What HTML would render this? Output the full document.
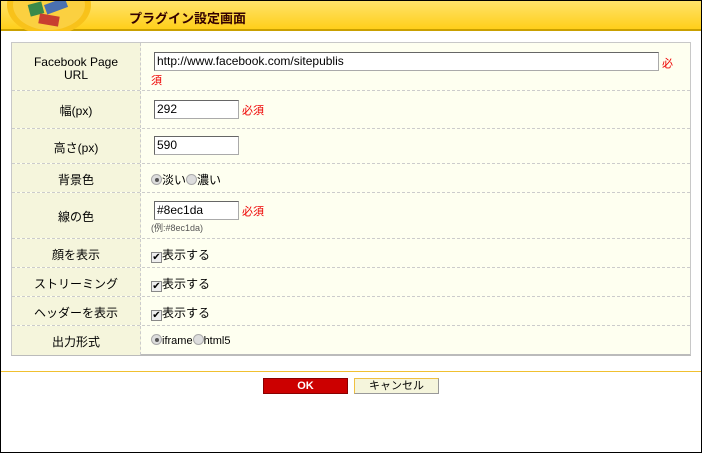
<!DOCTYPE html>
<html><head><meta charset="utf-8"><style>
*{margin:0;padding:0;box-sizing:border-box}
body{width:702px;height:453px;position:relative;background:#fff;font-family:"Liberation Sans","Noto Sans CJK JP",sans-serif;font-size:12px;color:#000;overflow:hidden}
.frame{position:absolute;left:0;top:0;width:702px;height:453px;border:1px solid #000}
.hdr{position:absolute;left:1px;top:1px;width:700px;height:30px;background:linear-gradient(#ffe36a,#ffcf1a);border-bottom:2px solid #c9a000}
.hdr .t{position:absolute;left:128px;top:7px;font-size:13px;font-weight:bold;color:#300}
.tbl{position:absolute;left:11px;top:42px;width:680px;height:314px;border:1px solid #c8c8c8;border-bottom:2px solid #bbb;background:#fefff0}
.lab{position:absolute;left:0;width:129px;background:#f5f5dc;border-right:1px dashed #ccc;text-align:center;padding-top:2px}
.row{position:absolute;left:0;width:678px;border-bottom:1px dashed #ccc}
.in{position:absolute;height:19px;border:1px solid #aaa;border-top-color:#666;border-left-color:#666;background:#fff;font-size:12px;padding:2px 2px;line-height:13px}
.req{position:absolute;color:#e00;font-size:11px}
.v{position:absolute;left:142px}
.rad{display:inline-block;width:11px;height:11px;border-radius:50%;border:1px solid #aaa;background:#ddd;vertical-align:-1px;position:relative}
.rad.on:after{content:"";position:absolute;left:3px;top:3px;width:4px;height:4px;border-radius:50%;background:#555}
.cb{display:inline-block;width:11px;height:11px;border:1px solid #888;background:#eee;vertical-align:-1px;font-size:10px;line-height:9px;text-align:center}
</style></head><body>
<div class="frame"></div>
<div class="hdr">
<svg width="100" height="30" style="position:absolute;left:0;top:0"><ellipse cx="48" cy="4" rx="42" ry="30" fill="#f8c21a"/><ellipse cx="48" cy="4" rx="36" ry="25" fill="#fbd040"/><rect x="28" y="2" width="14" height="12" fill="#3a8a4a" transform="rotate(-15 35 8)"/><rect x="44" y="0" width="22" height="10" fill="#4a70b0" transform="rotate(-20 55 5)"/><rect x="38" y="14" width="20" height="10" fill="#c84030" transform="rotate(10 48 19)"/></svg>
<div class="t">プラグイン設定画面</div></div>
<div class="tbl">
<div class="row" style="top:0;height:48px"><div class="lab" style="height:47px;padding-top:13px;line-height:13px">Facebook Page<br>URL</div></div>
<div class="row" style="top:48px;height:38px"><div class="lab" style="height:37px;line-height:37px">幅(px)</div></div>
<div class="row" style="top:86px;height:35px"><div class="lab" style="height:34px;line-height:34px">高さ(px)</div></div>
<div class="row" style="top:121px;height:29px"><div class="lab" style="height:28px;line-height:28px">背景色</div></div>
<div class="row" style="top:150px;height:46px"><div class="lab" style="height:45px;line-height:45px">線の色</div></div>
<div class="row" style="top:196px;height:29px"><div class="lab" style="height:28px;line-height:28px">顔を表示</div></div>
<div class="row" style="top:225px;height:29px"><div class="lab" style="height:28px;line-height:28px">ストリーミング</div></div>
<div class="row" style="top:254px;height:29px"><div class="lab" style="height:28px;line-height:28px">ヘッダーを表示</div></div>
<div class="row" style="top:283px;height:29px;border-bottom:none"><div class="lab" style="height:29px;line-height:29px">出力形式</div></div>
</div>
<div class="in" style="left:154px;top:52px;width:505px">http://www.facebook.com/sitepublis</div>
<div class="req" style="left:662px;top:55px">必</div>
<div class="req" style="left:151px;top:72px">須</div>
<div class="in" style="left:154px;top:100px;width:85px">292</div><div class="req" style="left:242px;top:102px">必須</div>
<div class="in" style="left:154px;top:136px;width:85px">590</div>
<div class="v" style="left:151px;top:171px"><span class="rad on"></span>淡い<span class="rad"></span>濃い</div>
<div class="in" style="left:154px;top:201px;width:85px">#8ec1da</div><div class="req" style="left:242px;top:203px">必須</div>
<div style="position:absolute;left:151px;top:221px;font-size:9px;color:#555">(例:#8ec1da)</div>
<div class="v" style="left:151px;top:246px"><span class="cb">✔</span>表示する</div>
<div class="v" style="left:151px;top:275px"><span class="cb">✔</span>表示する</div>
<div class="v" style="left:151px;top:304px"><span class="cb">✔</span>表示する</div>
<div class="v" style="left:151px;top:334px;font-size:11px"><span class="rad on"></span>iframe<span class="rad"></span>html5</div>
<div style="position:absolute;left:1px;top:371px;width:700px;height:1px;background:#f0c030"></div>
<div style="position:absolute;left:263px;top:378px;width:85px;height:16px;background:#cc0000;border:1px solid #800;color:#fff;font-weight:bold;font-size:11px;text-align:center;line-height:14px">OK</div>
<div style="position:absolute;left:354px;top:378px;width:85px;height:16px;background:#f5f5dc;border:1px solid #999;border-top-color:#f0c040;border-left-color:#f0c040;font-size:11px;text-align:center;line-height:14px">キャンセル</div>
</body></html>
